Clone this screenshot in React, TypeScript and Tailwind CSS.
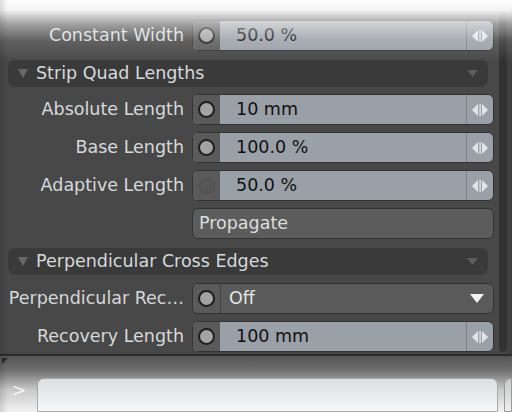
import React from "react";

const font = { fontFamily: '"DejaVu Sans", Verdana, sans-serif' };

const Circle = ({ dim }: { dim?: boolean }) => (
  <div className="flex h-full w-[27px] shrink-0 items-center justify-center bg-[#5a5a5a]">
    {dim ? (
      <div className="h-[16px] w-[16px] rounded-full border border-[#4e4e4e] bg-[#575757]" />
    ) : (
      <div className="h-[17px] w-[17px] rounded-full border-2 border-[#1e1e1e] bg-[#a3a3a3]" />
    )}
  </div>
);

const Arrows = () => (
  <div className="flex h-full w-[27px] shrink-0 items-center justify-center border-l border-[#7b8088]">
    <svg width="18" height="14" viewBox="0 0 18 14">
      <polygon points="7,1 7,13 1,7" fill="#e2e5e8" />
      <rect x="8.4" y="1" width="1.4" height="12" fill="#e2e5e8" />
      <polygon points="11,1 11,13 17,7" fill="#e2e5e8" />
    </svg>
  </div>
);

const Label = ({ text }: { text: string }) => (
  <div className="w-[184px] shrink-0 whitespace-nowrap text-right text-[17.5px] text-[#d6d9dc]">
    {text}
  </div>
);

const NumberRow = ({ label, value, dim }: { label: string; value: string; dim?: boolean }) => (
  <div className="flex h-[31px] items-center gap-2">
    <Label text={label} />
    <div className="flex h-full w-[302px] items-center overflow-hidden rounded-[6px] border border-[#333] bg-[#9aa0a8]">
      <Circle dim={dim} />
      <div className="flex h-full flex-1 items-center pl-[16px] text-[17.5px] text-[#111]">{value}</div>
      <Arrows />
    </div>
  </div>
);

const Header = ({ title }: { title: string }) => (
  <div className="ml-2 mr-[6px] mt-[2px] flex h-[27px] items-center rounded-[8px] bg-[#3a3a3a] pl-[10px] pr-[10px]">
    <svg width="10" height="9" viewBox="0 0 10 9">
      <polygon points="0,0 10,0 5,9" fill="#676767" />
    </svg>
    <span className="ml-[8px] flex-1 text-[17.5px] text-[#d6d9dc]">{title}</span>
    <svg width="11" height="7" viewBox="0 0 11 7">
      <polygon points="0,0 11,0 5.5,7" fill="#5d5d5d" />
    </svg>
  </div>
);

export default function App() {
  return (
    <div className="relative h-[412px] w-[512px] overflow-hidden bg-[#484848]" style={font}>
      <div className="flex h-[354px]">
        <div className="flex flex-1 flex-col gap-[7px] pt-[20px]">
          <NumberRow label="Constant Width" value="50.0 %" />
          <Header title="Strip Quad Lengths" />
          <NumberRow label="Absolute Length" value="10 mm" />
          <NumberRow label="Base Length" value="100.0 %" />
          <NumberRow label="Adaptive Length" value="50.0 %" dim />
          <div className="flex h-[31px] items-center gap-2">
            <div className="w-[184px] shrink-0" />
            <div className="flex h-full w-[302px] items-center rounded-[6px] border border-[#343434] bg-[#5c5c5c] pl-[6px] text-[17.5px] text-[#dcdcdc]">
              Propagate
            </div>
          </div>
          <Header title="Perpendicular Cross Edges" />
          <div className="mt-[1px] flex h-[31px] items-center gap-2">
            <Label text="Perpendicular Rec…" />
            <div className="flex h-full w-[302px] items-center overflow-hidden rounded-[6px] border border-[#333] bg-[#5a5a5a]">
              <div className="h-full border-r border-[#404040]">
                <Circle />
              </div>
              <div className="flex h-full flex-1 items-center pl-[8px] text-[17.5px] text-[#e4e4e4]">Off</div>
              <svg className="mr-[9px]" width="14" height="9" viewBox="0 0 14 9">
                <polygon points="0,0 14,0 7,9" fill="#f2f2f2" />
              </svg>
            </div>
          </div>
          <NumberRow label="Recovery Length" value="100 mm" />
        </div>
        <div className="flex w-[18px] shrink-0">
          <div className="ml-[5px] h-[352px] w-[8px] rounded-b-[4px] bg-[#323232]" />
          <div className="flex-1 bg-[#404040]" />
        </div>
      </div>

      <div className="h-[2px] bg-[#2c2c2c]" />
      <div className="relative h-[56px] bg-[linear-gradient(to_bottom,#555_0%,#6e6e6e_25%,#c8c8c8_60%,#f2f2f2_100%)]">
        <svg className="absolute left-[2px] top-[2px]" width="6" height="6" viewBox="0 0 6 6">
          <polygon points="0,0 6,0 0,6" fill="#2a2a2a" />
        </svg>
        <div className="flex h-full items-end gap-[6px] pl-[12px]">
          <div className="mb-[13px] w-[19px] text-[17px] leading-none text-[#f4f4f4]">&gt;</div>
          <div className="h-[34px] w-[461px] rounded-t-[7px] border border-[#a8a8a8] bg-[linear-gradient(to_bottom,#dcdfe2,#f6f7f8)]" />
          <div className="h-[34px] flex-1 rounded-tl-[7px] border border-[#9a9a9a] bg-[linear-gradient(to_bottom,#c6c8ca,#eeeeee)]" />
        </div>
      </div>

      <div className="pointer-events-none absolute left-0 top-0 h-[62px] w-full bg-[linear-gradient(to_bottom,#ffffff_0%,rgba(255,255,255,0.94)_16%,rgba(255,255,255,0.5)_38%,rgba(255,255,255,0.14)_65%,rgba(255,255,255,0)_100%)]" />
      <div className="pointer-events-none absolute left-0 top-0 h-full w-[8px] bg-[linear-gradient(to_right,rgba(0,0,0,0.12),rgba(0,0,0,0))]" />
    </div>
  );
}
